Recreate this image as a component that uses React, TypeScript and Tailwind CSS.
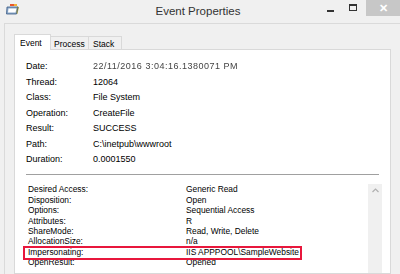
import React from 'react';

const topRows: [string, string][] = [
  ['Thread:', '12064'],
  ['Class:', 'File System'],
  ['Operation:', 'CreateFile'],
  ['Result:', 'SUCCESS'],
  ['Path:', 'C:\\inetpub\\wwwroot'],
  ['Duration:', '0.0001550'],
];

const detailRows: [string, string][] = [
  ['Desired Access:', 'Generic Read'],
  ['Disposition:', 'Open'],
  ['Options:', 'Sequential Access'],
  ['Attributes:', 'R'],
  ['ShareMode:', 'Read, Write, Delete'],
  ['AllocationSize:', 'n/a'],
  ['Impersonating:', 'IIS APPPOOL\\SampleWebsite'],
  ['OpenResult:', 'Opened'],
];

const AppIcon = () => (
  <svg width="14" height="11" viewBox="0 0 14 11">
    <rect x="4" y="0" width="4" height="2" fill="#e8572a" />
    <rect x="8" y="0" width="3" height="2" fill="#f2b134" />
    <path d="M1 3h11l-1.5 7H0.5z" fill="#8aa7c8" />
    <path d="M2.5 4.5h8l-1 4h-7.5z" fill="#ffffff" />
    <path d="M11 2.5l2 0.5-1.6 7-1.2-0.2z" fill="#c9b43a" />
    <path d="M1 3h11l-1.5 7H0.5z" fill="none" stroke="#3b5c86" strokeWidth="0.8" />
  </svg>
);

const App = () => {
  return (
    <div
      className="w-[400px] h-[274px] overflow-hidden bg-[#f0f0f0] flex flex-col text-black"
      style={{ fontFamily: '"Liberation Sans", Arial, sans-serif' }}
    >
      {/* title bar */}
      <div className="h-[23px] flex items-start shrink-0">
        <div className="w-[150px] pl-[6px] pt-[4px]">
          <AppIcon />
        </div>
        <div className="flex-1 text-center text-[11.5px] leading-[23px] text-[#333] -ml-[4px]">Event Properties</div>
        <div className="w-[150px] flex justify-end items-start">
          <div className="w-[20px] h-[16px] flex items-center justify-center">
            <div className="w-[7px] h-[2px] bg-[#333] mt-[5px]" />
          </div>
          <div className="w-[26px] h-[16px] flex items-center justify-center">
            <div className="w-[8px] h-[7px] border border-[#333] border-t-2 -mt-[1px]" />
          </div>
          <div className="w-[34px] h-[16px] bg-[#c7c7c7] flex items-center justify-center text-white text-[11px] font-bold">
            ✕
          </div>
        </div>
      </div>

      {/* client area */}
      <div className="flex-1 ml-[4px] border-l border-t border-[#dadada] pt-[10px] pl-[9px] pr-[9px] flex flex-col">
        <div className="flex items-end h-[16px] text-[8.5px]">
          <div className="h-[16px] w-[37px] bg-white border border-b-0 border-[#d9d9d9] pl-[5px] pt-[2px] relative z-10">
            Event
          </div>
          <div className="h-[14px] w-[38px] bg-[#f0f0f0] border border-l-0 border-[#d9d9d9] pl-[3px] pt-[1px]">
            Process
          </div>
          <div className="h-[14px] w-[33px] bg-[#f0f0f0] border border-l-0 border-[#d9d9d9] pl-[4px] pt-[1px]">
            Stack
          </div>
        </div>
        <div className="flex-1 -mt-[1px] bg-white border border-[#d9d9d9] pt-[9px] pl-[11px] pr-[8px] flex flex-col">
          <div className="flex h-[15.5px] items-center text-[9px]">
            <div className="w-[67px]">Date:</div>
            <div className="text-[#444] tracking-[0.5px] blur-[0.3px]">22/11/2016 3:04:16.1380071 PM</div>
          </div>
          {topRows.map(([k, v]) => (
            <div key={k} className="flex h-[15.5px] items-center text-[9px]">
              <div className="w-[67px]">{k}</div>
              <div>{v}</div>
            </div>
          ))}
          <div className="mt-[6px] h-px bg-[#a0a0a0] mr-[3px]" />
          <div className="flex mt-[9px] flex-1">
            <div className="flex-1 relative pt-[1px] pl-[2px]">
              {detailRows.map(([k, v]) => (
                <div key={k} className="flex h-[10.4px] items-center text-[8.4px]">
                  <div className="w-[158px]">{k}</div>
                  <div>{v}</div>
                </div>
              ))}
              <div className="absolute left-[-3px] top-[62px] w-[279px] h-[14px] border-2 border-[#e8173c]" />
            </div>
            <div className="w-[14px] bg-[#f0f0f0] flex justify-center pt-[4px]">
              <svg width="7" height="5" viewBox="0 0 7 5">
                <path d="M0.5 4L3.5 1l3 3" fill="none" stroke="#b0b0b0" strokeWidth="1.2" />
              </svg>
            </div>
          </div>
        </div>
      </div>
    </div>
  );
};

export default App;
